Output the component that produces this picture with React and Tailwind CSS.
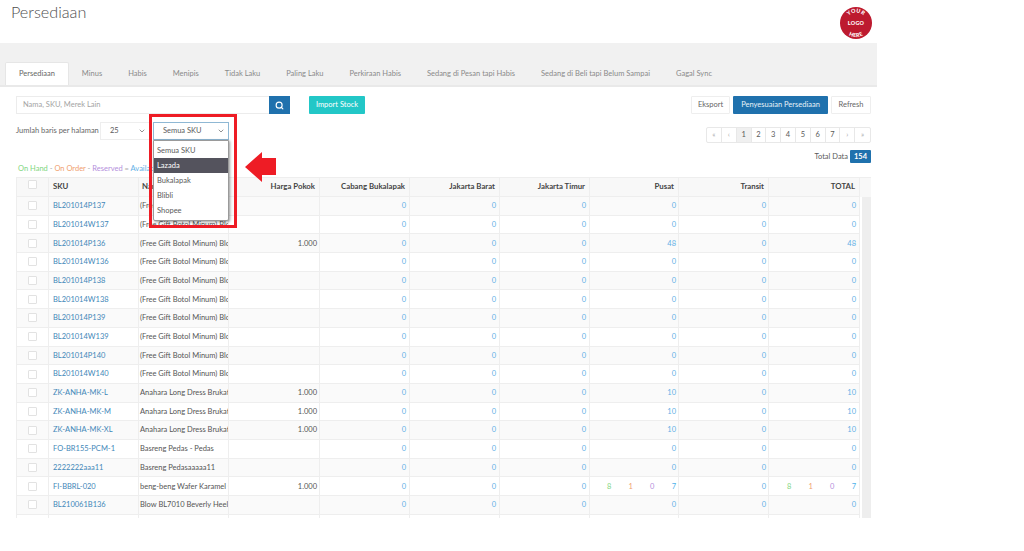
import React from "react";
import { Search, ChevronDown } from "lucide-react";

const tabs = ["Persediaan","Minus","Habis","Menipis","Tidak Laku","Paling Laku","Perkiraan Habis","Sedang di Pesan tapi Habis","Sedang di Beli tapi Belum Sampai","Gagal Sync"];
const F = "(Free Gift Botol Minum) Blow BL7010 Beverly Heels";
const rows = [
  ["BL201014P137",F,"",0,0],["BL201014W137",F,"",0,0],["BL201014P136",F,"1.000",48,48],["BL201014W136",F,"",0,0],
  ["BL201014P138",F,"",0,0],["BL201014W138",F,"",0,0],["BL201014P139",F,"",0,0],["BL201014W139",F,"",0,0],
  ["BL201014P140",F,"",0,0],["BL201014W140",F,"",0,0],
  ["ZK-ANHA-MK-L","Anahara Long Dress Brukat Hitam","1.000",10,10],["ZK-ANHA-MK-M","Anahara Long Dress Brukat Hitam","1.000",10,10],["ZK-ANHA-MK-XL","Anahara Long Dress Brukat Hitam","1.000",10,10],
  ["FO-BR155-PCM-1","Basreng Pedas - Pedas","",0,0],["2222222aaa11","Basreng Pedasaaaaa11","",0,0],
  ["FI-BBRL-020","beng-beng Wafer Karamel Coklat","1.000","x","x"],["BL210061B136","Blow BL7010 Beverly Heels Black","",0,0],["BL210061B137","Blow BL7010 Beverly Heels Black","",0,0],
];
const cols = "grid grid-cols-[32px_90px_90px_91px_90px_90px_90px_89px_90px_91px]";
const cell = "border-r border-b border-[#eeeeee] flex items-center overflow-hidden whitespace-nowrap";
const Num = ({ v }) => v === "x" ? (
  <div className="w-[69px] ml-auto flex justify-between">
    <span className="text-[#7fd67f]">8</span><span className="text-[#f0a070]">1</span><span className="text-[#b48fdc]">0</span><span className="text-[#4fb2ea]">7</span>
  </div>
) : <span className="ml-auto text-[#5fb0e6]">{v}</span>;
const Check = () => <span className="block w-[9px] h-[9px] bg-white border border-[#e2e2e2] rounded-[1px]" />;

export default function App() {
  return (
    <div className="relative w-[1024px] h-[551px] bg-white overflow-hidden text-[7.5px] text-[#5a5a5a] font-['Lato','Noto_Sans',sans-serif]">
      <div className="w-[877px] h-[518px] overflow-hidden flex flex-col">
        <header className="h-[43px] shrink-0 flex justify-between pl-[11px] pr-[5px]">
          <h1 className="text-[16.2px] leading-[24px] font-light text-[#4f4f4f]">Persediaan</h1>
          <svg width="32" height="32" viewBox="0 0 32 32" className="mt-[7px]">
            <circle cx="16" cy="16" r="16" fill="#bd1a2f" />
            <defs>
              <path id="top" d="M5.5 16 A10.5 10.5 0 0 1 26.5 16" />
              <path id="bot" d="M2 16 A14 14 0 0 0 30 16" />
            </defs>
            <text fontSize="5.4" fontWeight="900" letterSpacing="0.3" fill="#fff" textAnchor="middle"><textPath href="#top" startOffset="50%">YOUR</textPath></text>
            <text x="16" y="18" fontSize="5.4" fontWeight="900" letterSpacing="0.3" fill="#fff" textAnchor="middle">LOGO</text>
            <text fontSize="5.4" fontWeight="900" letterSpacing="0.3" fill="#fff" textAnchor="middle"><textPath href="#bot" startOffset="50%">HERE</textPath></text>
          </svg>
        </header>

        <nav className="h-[44px] shrink-0 bg-[#f1f1f1] border-b-2 border-[#e9e9e9] flex items-end pl-[5px]">
          {tabs.map((t, i) => (
            <span key={t} className={"h-[23px] px-[13px] flex items-center text-[#8a8a8a] whitespace-nowrap " + (i === 0 ? "bg-white text-[#666] border border-b-0 border-[#e6e6e6] rounded-t-[2px]" : "")}>{t}</span>
          ))}
        </nav>

        <main className="flex-1 min-h-0 bg-white ml-[5px] pl-[11px] pr-[6px] flex flex-col">
          <div className="h-[90px] shrink-0 flex flex-col pt-[9px]">
            <div className="flex items-start">
              <div className="w-[253px] h-[18px] border border-[#ececec] border-r-0 flex items-center pl-[6px] text-[#a3a3a3]">Nama, SKU, Merek Lain</div>
              <button className="w-[21px] h-[18px] bg-[#1f71ad] flex items-center justify-center text-white"><Search size={9} strokeWidth={3} /></button>
              <button className="ml-[19px] w-[56px] h-[18px] bg-[#22c7c7] text-white rounded-[1px]">Import Stock</button>
              <div className="ml-auto flex gap-[3px]">
                <button className="w-[39px] h-[18px] bg-white border border-[#eeeeee] rounded-[1px] text-[#666]">Eksport</button>
                <button className="w-[95px] h-[18px] bg-[#1f71ad] text-[#e8f2f8] rounded-[1px]">Penyesuaian Persediaan</button>
                <button className="w-[40px] h-[18px] bg-white border border-[#eeeeee] rounded-[1px] text-[#666]">Refresh</button>
              </div>
            </div>
            <div className="flex justify-between items-start mt-[8px] flex-1">
              <div className="flex flex-col">
                <div className="flex items-center h-[18px]">
                  <span className="w-[84px] whitespace-nowrap text-[#666]">Jumlah baris per halaman</span>
                  <div className="w-[50px] h-[18px] border border-[#eeeeee] flex items-center justify-between pl-[9px] pr-[3px]">
                    <span>25</span><ChevronDown size={8} />
                  </div>
                  <div className="w-[76px] h-[18px] ml-[3px] border border-[#8fb8d4] bg-white flex items-center justify-between pl-[9px] pr-[3px] relative z-10">
                    <span>Semua SKU</span><ChevronDown size={8} />
                  </div>
                </div>
                <div className="mt-[23px] pl-[2px] whitespace-nowrap">
                  <span className="text-[#7fd67f]">On Hand</span><span className="text-[#aaa]"> - </span><span className="text-[#f0a070]">On Order</span><span className="text-[#aaa]"> - </span><span className="text-[#b48fdc]">Reserved</span><span className="text-[#aaa]"> = </span><span className="text-[#5fb0e6]">Available</span>
                </div>
              </div>
              <div className="flex flex-col items-end mt-[5px]">
                <div className="flex h-[16px] border border-[#e8e8e8] rounded-[2px]">
                  {["«","‹","1","2","3","4","5","6","7","›","»"].map((p, i) => (
                    <span key={i} className={"w-[14.82px] flex items-center justify-center border-r border-[#e8e8e8] last:border-r-0 " + (p === "1" ? "bg-[#f0f0f0] " : "") + (i < 2 || i > 8 ? "text-[#aaa]" : "")}>{p}</span>
                  ))}
                </div>
                <div className="flex items-center mt-[7px] gap-[2px]">
                  <span>Total Data</span>
                  <span className="w-[21px] h-[13px] bg-[#1f71ad] text-white font-bold rounded-[1px] flex items-center justify-center">154</span>
                </div>
              </div>
            </div>
          </div>

          <div className="border-l border-t border-[#eeeeee] flex-1 min-h-0 flex flex-col">
            <div className={cols + " h-[19px] shrink-0 bg-[#f8f8f8] font-bold text-[7.8px] text-[#444] pr-[13px]"}>
              <div className={cell + " justify-center items-start pt-[2px]"}><Check /></div>
              <div className={cell + " pl-[4px]"}>SKU</div>
              <div className={cell + " pl-[3px]"}>Nama</div>
              {["Harga Pokok","Cabang Bukalapak","Jakarta Barat","Jakarta Timur","Pusat","Transit","TOTAL"].map(h => (
                <div key={h} className={cell + " justify-end pr-[4px]"}>{h}</div>
              ))}
            </div>
            <div className="flex-1 min-h-0 flex overflow-hidden">
              <div className="w-[843px] shrink-0">
                {rows.map((r, i) => (
                  <div key={i} className={cols + " h-[18.7px] " + (i % 2 === 0 ? "bg-[#fafafa]" : "bg-white")}>
                    <div className={cell + " justify-center"}><Check /></div>
                    <div className={cell + " pl-[4px] text-[#3f87b8]"}>{r[0]}</div>
                    <div className={cell + " pl-[1px] text-[#555]"}>{r[1]}</div>
                    <div className={cell + " justify-end pr-[2px] text-[#555]"}>{r[2]}</div>
                    <div className={cell + " pr-[3px]"}><Num v={0} /></div>
                    <div className={cell + " pr-[3px]"}><Num v={0} /></div>
                    <div className={cell + " pr-[3px]"}><Num v={0} /></div>
                    <div className={cell + " pr-[2px]"}><Num v={r[3]} /></div>
                    <div className={cell + " pr-[2px]"}><Num v={0} /></div>
                    <div className={cell + " pr-[3px]"}><Num v={r[4]} /></div>
                  </div>
                ))}
              </div>
              <div className="w-[9px] ml-auto bg-[#eeeeee]" />
            </div>
          </div>
        </main>
      </div>

      <div className="absolute left-[153px] top-[140px] w-[76px] h-[81px] bg-white border border-[#9a9a9a] rounded-b-[2px] shadow-[1px_1px_3px_rgba(0,0,0,0.4)] pt-[2px] z-20">
        {["Semua SKU","Lazada","Bukalapak","Blibli","Shopee"].map(o => (
          <div key={o} className={"h-[15px] flex items-center pl-[3px] " + (o === "Lazada" ? "bg-[#54535d] text-white" : "")}>{o}</div>
        ))}
      </div>
      <div className="absolute left-[149px] top-[114px] w-[88px] h-[114px] border-[3px] border-[#ee1c25] z-30" />
      <svg className="absolute left-[245px] top-[152px] z-30" width="32" height="30" viewBox="0 0 32 30">
        <path d="M0 15 L17 0 L17 6 L31 6 L31 23 L17 23 L17 30 Z" fill="#ee1c25" />
      </svg>
    </div>
  );
}
